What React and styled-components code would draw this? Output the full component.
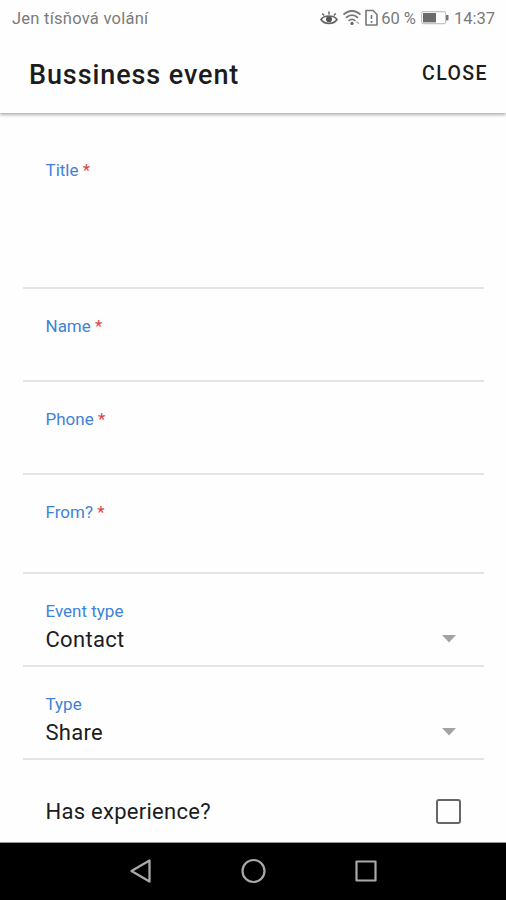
import { useState } from 'react';
import styled, { createGlobalStyle } from 'styled-components';

const colors = {
  white: '#fefefe',
  black: '#000',
  text: '#1c1c1c',
  status: '#7a7a7a',
  label: '#4083d6',
  required: '#dc4444',
  line: '#e4e4e4',
  arrow: '#a3a3a3',
  nav: '#a9a9a9',
};

const fields = [
  { label: 'Title', required: true, height: 171 },
  { label: 'Name', required: true, height: 93 },
  { label: 'Phone', required: true, height: 93 },
  { label: 'From?', required: true, height: 99 },
  { label: 'Event type', value: 'Contact', height: 93 },
  { label: 'Type', value: 'Share', height: 93 },
];

function StatusIcons() {
  return (
    <StatusGroup>
      <svg width="18" height="18" viewBox="0 0 18 18" fill="none" stroke="#666">
        <path d="M1 10.5C4 5.8 14 5.8 17 10.5C14 15.6 4 15.6 1 10.5Z" strokeWidth="1.7" />
        <circle cx="9" cy="10.3" r="3" fill="#555" stroke="none" />
        <path d="M2.2 4.5L4.2 6.6M9 2.4V5.4M15.8 4.5L13.8 6.6" strokeWidth="1.5" />
      </svg>
      <WifiIcon width="20" height="18" viewBox="0 0 20 18" fill="none" stroke="#777">
        <path d="M1.5 5.6C6.5 0.8 13.5 0.8 18.5 5.6" strokeWidth="1.8" />
        <path d="M4 8.8C8 5.3 12 5.3 16 8.8" strokeWidth="1.8" />
        <path d="M6.5 12C8.7 10 11.3 10 13.5 12" strokeWidth="1.6" />
        <circle cx="10" cy="14.4" r="1.6" fill="#666" stroke="none" />
        <path d="M14.5 12.8L17 14.8" strokeWidth="1.4" stroke="#aaa" />
      </WifiIcon>
      <SimIcon width="13" height="18" viewBox="0 0 13 18" fill="none" stroke="#777">
        <path d="M1 1.5H8L12 5.5V16H1Z" strokeWidth="1.6" strokeLinejoin="round" />
        <path d="M6.5 6V10M6.5 12V14" strokeWidth="1.6" />
      </SimIcon>
      <Percent>60 %</Percent>
      <svg width="29" height="14" viewBox="0 0 29 14">
        <rect x="0.7" y="0.7" width="24" height="12" rx="1.5" fill="none" stroke="#b5b5b5" />
        <rect x="2" y="2" width="13" height="9.4" fill="#6c6c6c" />
        <path d="M25 4H27.5V9.4H25Z" fill="#777" />
      </svg>
      <Clock>14:37</Clock>
    </StatusGroup>
  );
}

function Field({ label, required, value, height }) {
  return (
    <FieldRow $height={height}>
      <Label>
        {label}
        {required && <Required> *</Required>}
      </Label>
      {value && (
        <SelectWrap>
          <Value>{value}</Value>
          <svg width="14" height="8" viewBox="0 0 14 8">
            <path d="M0 0H14L7 7.5Z" fill={colors.arrow} />
          </svg>
        </SelectWrap>
      )}
    </FieldRow>
  );
}

function App() {
  const [checked, setChecked] = useState(false);

  return (
    <>
      <GlobalStyle />
      <Screen>
        <StatusBar>
          <Carrier>Jen tísňová volání</Carrier>
          <StatusIcons />
        </StatusBar>
        <Header>
          <Heading>Bussiness event</Heading>
          <CloseButton>CLOSE</CloseButton>
        </Header>
        <Form>
          {fields.map((field) => (
            <Field key={field.label} {...field} />
          ))}
          <CheckRow>
            <CheckText>Has experience?</CheckText>
            <CheckBox
              role="checkbox"
              aria-checked={checked}
              $checked={checked}
              onClick={() => setChecked(!checked)}
            />
          </CheckRow>
        </Form>
        <NavBar>
          <svg width="24" height="28" viewBox="0 0 24 28" fill="none" stroke={colors.nav}>
            <path d="M3.5 14L21.5 3.5V24.5Z" strokeWidth="2.3" strokeLinejoin="round" />
          </svg>
          <svg width="28" height="28" viewBox="0 0 28 28" fill="none" stroke={colors.nav}>
            <circle cx="14.5" cy="14" r="11" strokeWidth="2.2" />
          </svg>
          <svg width="24" height="28" viewBox="0 0 24 28" fill="none" stroke={colors.nav}>
            <rect x="2.5" y="4.5" width="19" height="19" strokeWidth="2.2" strokeLinejoin="round" />
          </svg>
        </NavBar>
      </Screen>
    </>
  );
}

const GlobalStyle = createGlobalStyle`
  * {
    box-sizing: border-box;
  }

  body {
    margin: 0;
    background: ${colors.white};
    font-family: Roboto, 'Liberation Sans', sans-serif;
  }

  svg {
    display: block;
  }
`;

const Screen = styled.div`
  display: flex;
  flex-direction: column;
  width: 506px;
  height: 900px;
  overflow: hidden;
  background: ${colors.white};
`;

const StatusBar = styled.div`
  display: flex;
  flex: none;
  align-items: center;
  justify-content: space-between;
  height: 36px;
  padding: 0 11px 0 12px;
  color: ${colors.status};
  font-size: 16.5px;
`;

const Carrier = styled.div`
  letter-spacing: 0.25px;
`;

const StatusGroup = styled.div`
  display: flex;
  align-items: center;
`;

const WifiIcon = styled.svg`
  margin-left: 4px;
`;

const SimIcon = styled.svg`
  margin-left: 3px;
`;

const Percent = styled.div`
  margin: 0 5px 0 3px;
`;

const Clock = styled.div`
  margin-left: 4px;
`;

const Header = styled.header`
  display: flex;
  flex: none;
  align-items: center;
  justify-content: space-between;
  height: 77px;
  padding: 0 18px 3px 29px;
  box-shadow: 0 2px 3px rgba(0, 0, 0, 0.3);
  clip-path: inset(0 0 -8px 0);
`;

const Heading = styled.h1`
  margin: 0;
  padding-top: 3px;
  color: ${colors.text};
  font-size: 27px;
  font-weight: 500;
  letter-spacing: 0.9px;
`;

const CloseButton = styled.button`
  padding: 0;
  border: 0;
  background: none;
  color: ${colors.text};
  font-family: inherit;
  font-size: 19.5px;
  font-weight: 500;
  letter-spacing: 1.4px;
`;

const Form = styled.main`
  flex: 1;
  padding: 5px 22px 0 23px;
`;

const FieldRow = styled.div`
  display: flex;
  flex-direction: column;
  height: ${(props) => props.$height}px;
  padding: ${(props) => (props.$height > 100 ? 41 : 26)}px 28px 0 22.5px;
  border-bottom: 2px solid ${colors.line};
`;

const Label = styled.label`
  color: ${colors.label};
  font-size: 17px;
  line-height: 22px;
  white-space: pre;
`;

const Required = styled.span`
  color: ${colors.required};
`;

const SelectWrap = styled.div`
  display: flex;
  align-items: center;
  justify-content: space-between;
  height: 34px;
`;

const Value = styled.div`
  padding-top: 1px;
  color: ${colors.text};
  font-size: 22px;
  letter-spacing: 0.3px;
`;

const CheckRow = styled.div`
  display: flex;
  align-items: center;
  justify-content: space-between;
  height: 82px;
  padding: 20px 23px 0 22.5px;
`;

const CheckText = styled.div`
  color: ${colors.text};
  font-size: 22px;
  letter-spacing: 0.27px;
`;

const CheckBox = styled.button`
  width: 25px;
  height: 25px;
  padding: 0;
  border: 2px solid #666;
  border-radius: 3px;
  background: ${(props) => (props.$checked ? '#666' : 'transparent')};
`;

const NavBar = styled.nav`
  display: flex;
  flex: none;
  align-items: center;
  justify-content: center;
  gap: 87px;
  height: 59px;
  padding-bottom: 2px;
  border-top: 1px solid #999;
  background: ${colors.black};
`;

export default App;
